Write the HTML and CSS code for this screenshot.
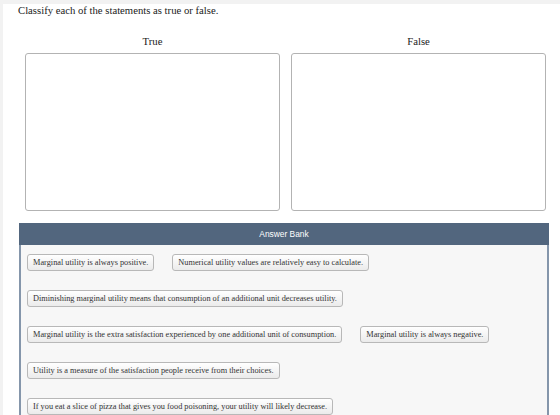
FILE: index.html
```html
<!DOCTYPE html>
<html>
<head>
<meta charset="utf-8">
<link rel="stylesheet" href="styles.css">
</head>
<body>
<div class="frame">
  <p class="prompt">Classify each of the statements as true or false.</p>
  <div class="bins">
    <div class="bin">
      <div class="bin-label">True</div>
      <div class="bin-box"></div>
    </div>
    <div class="bin">
      <div class="bin-label">False</div>
      <div class="bin-box"></div>
    </div>
  </div>
  <div class="bank">
    <div class="bank-head">Answer Bank</div>
    <div class="bank-body">
      <span class="chip">Marginal utility is always positive.</span>
      <span class="chip">Numerical utility values are relatively easy to calculate.</span>
      <span class="chip">Diminishing marginal utility means that consumption of an additional unit decreases utility.</span>
      <span class="chip">Marginal utility is the extra satisfaction experienced by one additional unit of consumption.</span>
      <span class="chip">Marginal utility is always negative.</span>
      <span class="chip">Utility is a measure of the satisfaction people receive from their choices.</span>
      <span class="chip">If you eat a slice of pizza that gives you food poisoning, your utility will likely decrease.</span>
    </div>
  </div>
</div>
</body>
</html>
```

FILE: styles.css
```css
html, body {
  margin: 0;
  padding: 0;
  background: #ffffff;
  height: 100%;
  overflow: hidden;
}
.frame {
  border-top: 4px solid #f2f2f2;
  border-left: 3px solid #f2f2f2;
  min-height: 100%;
  box-sizing: border-box;
  font-family: "Liberation Serif", "Times New Roman", serif;
  color: #222;
}
.prompt {
  margin: 0;
  padding: 0 0 0 15px;
  font-size: 10.7px;
  line-height: 13px;
}
.bins {
  display: grid;
  grid-template-columns: 1fr 1fr;
  column-gap: 11px;
  margin: 18px 14px 0 22px;
}
.bin-label {
  text-align: center;
  font-size: 10.7px;
  line-height: 13px;
  margin-bottom: 5px;
}
.bin-box {
  height: 156px;
  border: 1px solid #b3b3b3;
  border-radius: 3px;
  background: #fff;
}
.bank {
  margin: 12px 11px 0 16px;
}
.bank-head {
  background: #52667e;
  color: #fff;
  font-family: "Liberation Sans", Arial, sans-serif;
  font-size: 8.4px;
  text-align: center;
  height: 22px;
  line-height: 22px;
}
.bank-body {
  background: #f7f7f7;
  border-left: 2px solid #8596ab;
  border-right: 2px solid #8596ab;
  padding: 9px 7px 40px 6px;
  display: flex;
  flex-wrap: wrap;
  column-gap: 18px;
  row-gap: 19px;
  align-items: flex-start;
}
.chip {
  display: inline-block;
  height: 17px;
  box-sizing: border-box;
  line-height: 15px;
  padding: 0 5px;
  font-size: 8.3px;
  color: #333;
  white-space: nowrap;
  background: linear-gradient(#ffffff, #ebebeb);
  border: 1px solid #b8b8b8;
  border-radius: 3px;
}
```
